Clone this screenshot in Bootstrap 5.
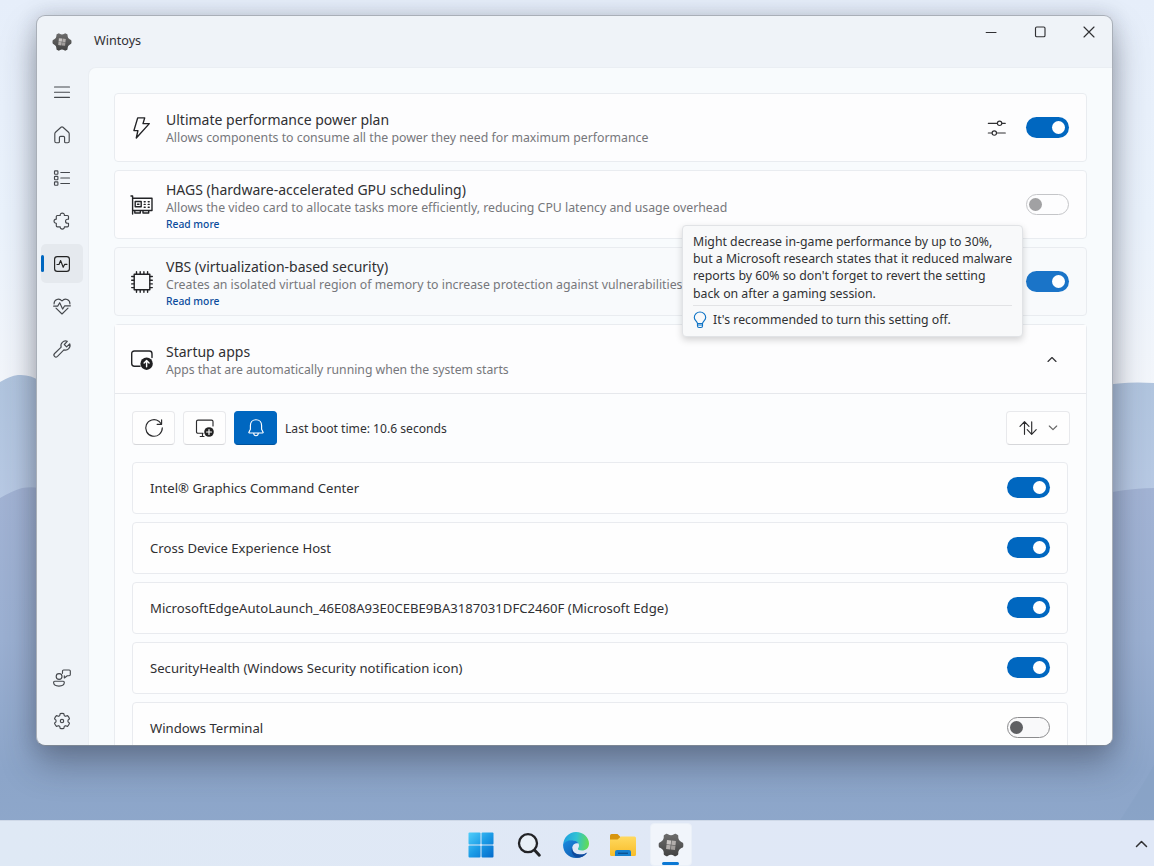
<!DOCTYPE html>
<html lang="en">
<head>
    <meta charset="UTF-8">
    <meta name="viewport" content="width=device-width, initial-scale=1.0">
    <title>Wintoys</title>
    <link href="https://cdn.jsdelivr.net/npm/bootstrap@5.3.0/dist/css/bootstrap.min.css" rel="stylesheet">
    <style>
        html, body {
            height: 100%;
        }
        body {
            font-family: "Noto Sans", "Open Sans", sans-serif;
            font-size: 13.13px;
            color: #303033;
            background: #e8eff9;
            overflow: hidden;
        }
        svg {
            display: block;
            flex: none;
        }
        .line-icon {
            fill: none;
            stroke: currentColor;
            stroke-width: 1.15;
            stroke-linecap: round;
            stroke-linejoin: round;
        }
        .wallpaper {
            position: absolute;
            inset: 0;
            z-index: -1;
        }
        .desktop-area {
            padding: 15px 41px 0 36px;
        }

        /* window */
        .app-window {
            height: 731px;
            border: 1px solid #a9afb8;
            border-bottom-color: #7d8794;
            border-radius: 9px;
            background: #eff3f8;
            box-shadow: 0 18px 34px rgba(40, 46, 60, .38), 0 0 20px rgba(40, 46, 60, .18);
            overflow: hidden;
        }
        .title-bar {
            height: 51px;
            padding-left: 15px;
        }
        .title-text {
            font-size: 12.6px;
            margin-left: 22px;
        }
        .caption-buttons {
            gap: 33px;
            height: 32px;
            padding-right: 15px;
        }
        .side-nav {
            width: 51px;
            padding: 6px 4px 5px;
        }
        .side-nav a {
            position: relative;
            display: flex;
            align-items: center;
            justify-content: center;
            width: 42px;
            height: 38.8px;
            margin-bottom: 4px;
            border-radius: 5px;
            color: #45484d;
        }
        .side-nav a.active {
            background: #e5e9ee;
            color: #222;
        }
        .side-nav a.active::before {
            content: "";
            position: absolute;
            left: 0;
            top: 11px;
            width: 3px;
            height: 17px;
            border-radius: 2px;
            background: #0067c0;
        }
        .page-body {
            min-width: 0;
            padding: 25px 25px 0 25px;
            border: 1px solid #eaeef3;
            border-width: 1px 0 0 1px;
            border-top-left-radius: 8px;
            background: #f8fbfd;
            overflow: hidden;
        }

        /* settings */
        .setting {
            height: 69px;
            margin-bottom: 8px;
            padding: 0 17px 0 15px;
            border: 1px solid #e9ecf0;
            border-radius: 4px;
            background: #fdfdfe;
        }
        .setting.hovered {
            background: #f8fafc;
        }
        .setting-icon {
            width: 24px;
            margin-right: 12px;
            color: #222326;
        }
        .setting-label {
            padding-top: 1px;
        }
        .setting-label.with-link {
            padding-top: 3px;
        }
        .setting-title {
            font-size: 14px;
            line-height: 19px;
            white-space: nowrap;
        }
        .setting-text {
            font-size: 12.31px;
            line-height: 18px;
            color: #76777b;
            white-space: nowrap;
        }
        .setting-link {
            font-size: 10.3px;
            font-weight: 500;
            line-height: 15px;
            color: #0b4c9c;
            text-decoration: none;
        }
        .toggle {
            width: 43px;
            height: 21px;
            margin-top: -1px;
            padding: 0 4px;
            border-radius: 11px;
            background: #0067c0;
            display: flex;
            align-items: center;
            justify-content: flex-end;
        }
        .toggle::after {
            content: "";
            width: 13px;
            height: 13px;
            border-radius: 50%;
            background: #fff;
        }
        .toggle.soft {
            background: #1a74c8;
        }
        .toggle.off {
            justify-content: flex-start;
            padding: 0 2px;
            border: 1px solid #8b8b8d;
            background: #f9f9fa;
        }
        .toggle.off::after {
            background: #5f6063;
        }
        .toggle.disabled {
            border-color: #c4c5c8;
            background: #fdfdfe;
        }
        .toggle.disabled::after {
            background: #a1a1a3;
        }

        /* startup apps */
        .expander {
            border: 1px solid #e9ecf0;
            border-radius: 4px;
            background: #fcfdfe;
        }
        .expander-head {
            height: 69px;
            padding: 2px 27px 0 15px;
            border-bottom: 1px solid #e6e8ec;
            background: #fdfdfe;
        }
        .expander-head .setting-text {
            font-size: 12.23px;
        }
        .expander-body {
            padding: 17px 18px 0 17px;
        }
        .tool-bar {
            margin-bottom: 17px;
        }
        .tool-btn {
            width: 43px;
            height: 34px;
            padding: 0;
            border: 1px solid #e8e9ec;
            border-bottom-color: #d6d7da;
            border-radius: 4px;
            background: #fefefe;
            color: #2b2b2d;
            display: flex;
            align-items: center;
            justify-content: center;
        }
        .tool-btn.wide {
            width: 64px;
            gap: 9px;
            margin-right: -2px;
        }
        .tool-btn.accent {
            border-color: #0067c0;
            border-bottom-color: #00539c;
            background: #0067c0;
            color: #fff;
        }
        .boot-time {
            font-size: 12.12px;
            padding-top: 2px;
        }
        .app-row {
            height: 51.9px;
            margin-bottom: 8px;
            padding: 0 17px;
            border: 1px solid #e9ebef;
            border-radius: 4px;
            background: #fefefe;
        }
        .app-row span {
            padding-top: 2px;
        }

        /* tooltip over the VBS row */
        .hint {
            position: absolute;
            left: 682px;
            top: 225px;
            z-index: 5;
            width: 341px;
            height: 112px;
            padding: 7px 10px 0 10px;
            border: 1px solid #e1e3e6;
            border-radius: 4px;
            background: #f8f9fa;
            box-shadow: 0 3px 7px rgba(0, 0, 0, .17);
            font-size: 12.31px;
            line-height: 17.2px;
            color: #303133;
            white-space: nowrap;
        }
        .hint-foot {
            margin-top: 3px;
            padding-top: 5px;
            border-top: 1px solid #e2e3e5;
            gap: 6px;
        }

        /* taskbar */
        .taskbar {
            position: absolute;
            inset: 820px 0 0 0;
            background: linear-gradient(90deg, #dfe9f5, #e0e8f6 60%, #e0e8f7);
            border-top: 1px solid #cfd9e8;
        }
        .taskbar-apps {
            gap: 5.3px;
            padding: 2px 2px 0 0;
        }
        .task-tile {
            position: relative;
            display: flex;
            align-items: center;
            justify-content: center;
            width: 42px;
            height: 43px;
            border-radius: 4px;
        }
        .task-tile.active {
            background: #f1f5fb;
            border: 1px solid #eaf0f8;
        }
        .task-tile.active::after {
            content: "";
            position: absolute;
            left: 11px;
            bottom: 0;
            width: 17px;
            height: 3px;
            border-radius: 2px;
            background: #0b78d4;
        }
        .tray-arrow {
            position: absolute;
            right: 6px;
            top: 17px;
        }
    </style>
</head>
<body>
    <svg class="wallpaper" width="1154" height="866" viewBox="0 0 1154 866">
        <defs>
            <linearGradient id="sky" x1="0" y1="0" x2="0" y2="1">
                <stop offset="0" stop-color="#e6eefa"/>
                <stop offset=".25" stop-color="#eaf2fc"/>
                <stop offset=".45" stop-color="#f3f6fb"/>
            </linearGradient>
            <linearGradient id="far" x1="0" y1="0" x2="0" y2="1">
                <stop offset="0" stop-color="#b0c4de"/>
                <stop offset=".3" stop-color="#b9cae5"/>
            </linearGradient>
            <linearGradient id="near" x1="0" y1="0" x2="0" y2="1">
                <stop offset="0" stop-color="#a2b3d4"/>
                <stop offset=".4" stop-color="#9bb0d2"/>
                <stop offset=".75" stop-color="#8ca5c9"/>
                <stop offset="1" stop-color="#8fa8cb"/>
            </linearGradient>
        </defs>
        <rect width="1154" height="866" fill="url(#sky)"/>
        <path d="M0 382Q10 376 18 375Q30 374 40 381L1100 386Q1125 381 1154 383V866H0Z" fill="url(#far)"/>
        <path d="M0 498Q12 491 22 488Q34 486 44 489L1100 495Q1120 489 1154 488V866H0Z" fill="url(#near)"/>
        <path d="M1154 765Q1140 790 1120 820H1154Z" fill="#7f99bf" opacity=".2"/>
    </svg>

    <svg width="0" height="0" class="position-absolute">
        <defs>
            <linearGradient id="gearFill" x1="0" y1="0" x2="0" y2="26" gradientUnits="userSpaceOnUse">
                <stop offset="0" stop-color="#707070"/>
                <stop offset="1" stop-color="#3f3f3f"/>
            </linearGradient>
            <symbol id="wintoys" viewBox="0 0 26 26">
                <path d="M8.300 1.800Q9.200 1.400 10 2.300Q13 4.300 16 2.300Q16.800 1.400 17.700 1.800L19.800 3Q20.700 3.700 20.200 4.900Q20.300 8.300 23.400 9.900Q25.300 10.500 25.300 11.800V14.200Q25.300 15.500 23.400 16.100Q20.300 17.700 20.200 21.100Q20.700 22.300 19.800 23L17.700 24.200Q16.800 24.600 16 23.700Q13 21.700 10 23.700Q9.200 24.600 8.300 24.200L6.200 23Q5.300 22.300 5.800 21.100Q5.700 17.700 2.600 16.100Q.700 15.500.700 14.200V11.800Q.700 10.500 2.600 9.900Q5.700 8.300 5.800 4.900Q5.300 3.700 6.200 3Z" fill="url(#gearFill)"/>
                <g fill="#c9c5c3" transform="rotate(6 13 13)">
                    <rect x="8.500" y="8.500" width="4.200" height="4.200"/>
                    <rect x="13.300" y="8.500" width="4.200" height="4.200" fill="#b2aeac"/>
                    <rect x="8.500" y="13.300" width="4.200" height="4.200" fill="#b2aeac"/>
                    <rect x="13.300" y="13.300" width="4.200" height="4.200" fill="#a09c9a"/>
                </g>
            </symbol>
        </defs>
    </svg>

    <div class="desktop-area">
        <div class="app-window d-flex flex-column">
            <div class="title-bar d-flex align-items-center flex-shrink-0">
                <svg width="20" height="20"><use href="#wintoys"/></svg>
                <span class="title-text">Wintoys</span>
                <div class="caption-buttons d-flex align-items-center ms-auto align-self-start">
                    <svg class="line-icon" width="16" height="16" viewBox="0 0 16 16"><path d="M3.200 8.500H13" /></svg>
                    <svg class="line-icon" width="16" height="16" viewBox="0 0 16 16"><rect x="3.500" y="3" width="9.500" height="9.700" rx="1.300"/></svg>
                    <svg class="line-icon" width="16" height="16" viewBox="0 0 16 16"><path d="M3 3L13 13M13 3L3 13"/></svg>
                </div>
            </div>

            <div class="d-flex flex-grow-1" style="min-height: 0">
                <nav class="side-nav d-flex flex-column flex-shrink-0">
                    <a href="#"><svg class="line-icon" width="20" height="20" viewBox="0 0 20 20"><path d="M2.500 5H17.500M2.500 10.200H17.500M2.500 15.300H17.500"/></svg></a>
                    <a href="#"><svg class="line-icon" width="20" height="20" viewBox="0 0 20 20"><path d="M2.800 8.800Q2.800 7.800 3.500 7.200L9 2.300Q10 1.500 11 2.300L16.500 7.200Q17.200 7.800 17.200 8.800V16.200Q17.200 17.700 15.700 17.700H13.600Q12.600 17.700 12.600 16.700V12.500Q12.600 11.300 11.400 11.300H8.600Q7.400 11.300 7.400 12.500V16.700Q7.400 17.700 6.400 17.700H4.300Q2.800 17.700 2.800 16.200Z"/></svg></a>
                    <a href="#"><svg class="line-icon" width="20" height="20" viewBox="0 0 20 20"><rect x="2.500" y="2.800" width="3.400" height="3.400" rx=".6"/><rect x="2.500" y="8.300" width="3.400" height="3.400" rx=".6"/><rect x="2.500" y="13.800" width="3.400" height="3.400" rx=".6"/><path d="M8.800 4.500H17.500M8.800 10H17.500M8.800 15.500H17.500"/></svg></a>
                    <a href="#"><svg class="line-icon" width="20" height="20" viewBox="0 0 20 20"><path d="M5.300 4.500H8.200C7.900 1.300 12.700 1.300 12.400 4.500H15.500Q16.500 4.500 16.500 5.500V8.200H15.500C12.900 8.200 12.900 12.200 15.500 12.200H16.500V14.800Q16.500 15.800 15.500 15.800H12.400C12.700 18.800 7.900 18.800 8.200 15.800H5.300Q4.300 15.800 4.300 14.800V12.200C1.300 12.500 1.300 7.900 4.300 8.200V5.500Q4.300 4.500 5.300 4.500Z"/></svg></a>
                    <a href="#" class="active"><svg class="line-icon" width="20" height="20" viewBox="0 0 20 20"><rect x="2.600" y="2.600" width="14.800" height="14.800" rx="2.700"/><path d="M5 10.500H7L8.600 6.500L11.200 13.300L12.700 10.300H15"/></svg></a>
                    <a href="#"><svg class="line-icon" width="20" height="20" viewBox="0 0 20 20"><path d="M2.100 7.900C1.800 3.500 7 1.300 10 5C13 1.300 18.200 3.500 17.900 7.900M4 12.100L10 18L16 12.100M1.600 10.100H5.700L7.700 6.700L10.600 13.100L12.700 9.800H18.400"/></svg></a>
                    <a href="#"><svg class="line-icon" width="20" height="20" viewBox="0 0 20 20"><path d="M15.300 2.300C11.500.900 7.900 4.400 9.200 8.200L2.600 14.500C.600 16.500 3.400 19.400 5.500 17.400L11.900 10.900C15.600 12.200 19.200 8.500 17.700 4.800L14.600 7.800L12.300 5.500Z"/></svg></a>

                    <a href="#" class="mt-auto"><svg class="line-icon" width="20" height="20" viewBox="0 0 20 20"><circle cx="7.100" cy="8.500" r="2.900"/><path d="M2.700 13.200H11.200Q12.300 13.200 12.300 14.300C12.300 19.300 1.600 19.300 1.600 14.300Q1.600 13.200 2.700 13.200ZM10.500 5.300V3.100Q10.500 2 11.600 2H17.200Q18.300 2 18.300 3.100V6.600Q18.300 7.700 17.200 7.700H15.300L12.300 10V7.700"/></svg></a>
                    <a href="#" class="mb-0"><svg class="line-icon" width="20" height="20" viewBox="0 0 20 20"><path d="M8.200 2.600Q10 2.200 11.800 2.600L12.300 4.700Q13 5 13.500 5.300L15.600 4.600Q17 6 17.500 7.800L16 9.200V10.800L17.500 12.200Q17 14 15.600 15.400L13.500 14.700Q13 15 12.300 15.300L11.800 17.400Q10 17.800 8.200 17.400L7.700 15.300Q7 15 6.500 14.700L4.400 15.400Q3 14 2.500 12.200L4 10.800V9.200L2.500 7.800Q3 6 4.400 4.600L6.500 5.300Q7 5 7.700 4.700Z"/><circle cx="10" cy="10" r="1.700"/></svg></a>
                </nav>

                <main class="page-body flex-grow-1">
                    <div class="setting d-flex align-items-center">
                        <div class="setting-icon"><svg class="line-icon" width="24" height="24" viewBox="0 0 24 24" style="stroke-width:1.400"><path d="M7.700 1.900H14.700L13 7.600H19.300L6.300 22L7.900 14.600H3.900Z"/></svg></div>
                        <div class="setting-label">
                            <div class="setting-title">Ultimate performance power plan</div>
                            <div class="setting-text">Allows components to consume all the power they need for maximum performance</div>
                        </div>
                        <svg class="line-icon ms-auto me-3" width="26" height="20" viewBox="0 0 26 20"><path d="M4.300 5.300H13.300M18 5.300H21.300M4.300 15H8M12.700 15H21.300"/><circle cx="15.600" cy="5.300" r="2.200"/><circle cx="10.300" cy="15" r="2.200"/></svg>
                        <div class="toggle"></div>
                    </div>

                    <div class="setting d-flex align-items-center">
                        <div class="setting-icon"><svg class="line-icon" width="24" height="24" viewBox="0 0 24 24" style="stroke-width:1.400"><path d="M1 3H2.600V21M2.600 5.300H22V17.500H2.600M4.800 17.500V20H10.300V17.500M13 17.500V20H18.700V17.500"/><rect x="5.200" y="8.500" width="6" height="5.300"/><path d="M14.200 8.700H15.200M18.200 8.700H19.200M14.200 11.400H15.200M18.200 11.400H19.200M14.200 14.300H15.200M18.200 14.300H19.200M7.500 11.300H9"/></svg></div>
                        <div class="setting-label with-link">
                            <div class="setting-title">HAGS (hardware-accelerated GPU scheduling)</div>
                            <div class="setting-text">Allows the video card to allocate tasks more efficiently, reducing CPU latency and usage overhead</div>
                            <a href="#" class="setting-link d-block">Read more</a>
                        </div>
                        <div class="toggle off disabled ms-auto"></div>
                    </div>

                    <div class="setting hovered d-flex align-items-center">
                        <div class="setting-icon"><svg class="line-icon" width="24" height="24" viewBox="0 0 24 24" style="stroke-width:1.400"><rect x="4.200" y="4.200" width="15.600" height="15.600"/><path d="M6.500 1.700V4M10.200 1.700V4M13.900 1.700V4M17.600 1.700V4M6.500 20V22.300M10.200 20V22.300M13.900 20V22.300M17.600 20V22.300M1.700 6.500H4M1.700 10.200H4M1.700 13.900H4M1.700 17.600H4M20 6.500H22.300M20 10.200H22.300M20 13.900H22.300M20 17.600H22.300"/></svg></div>
                        <div class="setting-label with-link">
                            <div class="setting-title">VBS (virtualization-based security)</div>
                            <div class="setting-text">Creates an isolated virtual region of memory to increase protection against vulnerabilities</div>
                            <a href="#" class="setting-link d-block">Read more</a>
                        </div>
                        <div class="toggle soft ms-auto"></div>
                    </div>

                    <div class="expander">
                        <div class="expander-head d-flex align-items-center">
                            <div class="setting-icon"><svg class="line-icon" width="24" height="24" viewBox="0 0 24 24" style="stroke-width:1.400"><path d="M10 18.200H4.400Q1.700 18.200 1.700 15.500V5.700Q1.700 3 4.400 3H19.300Q22 3 22 5.700V9.500"/><circle cx="16.600" cy="15.700" r="6.200" fill="#1f1f21" stroke="none"/><path d="M16.600 18.700V12.700M14.100 15L16.600 12.500L19.100 15" stroke="#fff"/></svg></div>
                            <div class="setting-label">
                                <div class="setting-title">Startup apps</div>
                                <div class="setting-text">Apps that are automatically running when the system starts</div>
                            </div>
                            <svg class="line-icon ms-auto" width="14" height="14" viewBox="0 0 14 14"><path d="M3 8.500L7 4.500L11 8.500"/></svg>
                        </div>

                        <div class="expander-body">
                            <div class="tool-bar d-flex align-items-center">
                                <button type="button" class="tool-btn me-2"><svg class="line-icon" width="20" height="20" viewBox="0 0 20 20"><path d="M18.300 9.800A8.300 8.300 0 1 1 14.800 3.200L17.300 5.800M17.600 1.800V6.300H13.100"/></svg></button>
                                <button type="button" class="tool-btn me-2"><svg class="line-icon" width="20" height="20" viewBox="0 0 20 20"><path d="M8 15.200H3Q1.500 15.200 1.500 13.700V3.600Q1.500 2.100 3 2.100H16.500Q18 2.100 18 3.600V8M7.500 15.500V18.500M5.200 18.500H9"/><circle cx="14" cy="14" r="4.800" fill="#222" stroke="none"/><path d="M14 11.500V16.500M11.500 14H16.500" stroke="#fff"/></svg></button>
                                <button type="button" class="tool-btn accent me-2"><svg class="line-icon" width="20" height="20" viewBox="0 0 20 20"><path d="M10 1.700C6.500 1.700 4.400 4.300 4.400 7.500V11.300L2.900 14.200Q2.600 15 3.400 15H16.600Q17.400 15 17.100 14.200L15.600 11.300V7.500C15.600 4.300 13.500 1.700 10 1.700ZM7.700 15.300C7.900 18.500 12.100 18.500 12.300 15.300"/></svg></button>
                                <span class="boot-time">Last boot time: 10.6 seconds</span>
                                <button type="button" class="tool-btn wide ms-auto"><svg class="line-icon" width="20" height="18" viewBox="0 0 20 18"><path d="M6.500 15.300V3M2 7.300L6.500 2.700L11 7.300M13.700 2.700V15M9.200 10.700L13.700 15.300L18.200 10.700"/></svg><svg class="line-icon" width="12" height="12" viewBox="0 0 12 12"><path d="M2.300 4L6 7.700L9.700 4" stroke="#666"/></svg></button>
                            </div>

                            <div class="app-row d-flex align-items-center justify-content-between"><span>Intel® Graphics Command Center</span><div class="toggle"></div></div>
                            <div class="app-row d-flex align-items-center justify-content-between"><span>Cross Device Experience Host</span><div class="toggle"></div></div>
                            <div class="app-row d-flex align-items-center justify-content-between"><span>MicrosoftEdgeAutoLaunch_46E08A93E0CEBE9BA3187031DFC2460F (Microsoft Edge)</span><div class="toggle"></div></div>
                            <div class="app-row d-flex align-items-center justify-content-between"><span>SecurityHealth (Windows Security notification icon)</span><div class="toggle"></div></div>
                            <div class="app-row d-flex align-items-center justify-content-between"><span>Windows Terminal</span><div class="toggle off"></div></div>
                        </div>
                    </div>
                </main>
            </div>
        </div>
    </div>

    <div class="hint">
        Might decrease in-game performance by up to 30%,<br>
        but a Microsoft research states that it reduced malware<br>
        reports by 60% so don't forget to revert the setting<br>
        back on after a gaming session.
        <div class="hint-foot d-flex align-items-center">
            <svg class="line-icon" width="14" height="18" viewBox="0 0 14 18" style="color:#0f74c6"><path d="M4.500 12.500C4.300 10.500 1.300 9.500 1.300 6.500A5.700 5.500 0 0 1 12.700 6.500C12.700 9.500 9.700 10.500 9.500 12.500ZM4.500 12.500V15Q4.500 16.500 6 16.500H8Q9.500 16.500 9.500 15V12.500M4.700 14H9.300"/></svg>
            <span>It's recommended to turn this setting off.</span>
        </div>
    </div>

    <footer class="taskbar">
        <div class="taskbar-apps d-flex justify-content-center">
            <div class="task-tile">
                <svg width="26" height="26" viewBox="0 0 26 26">
                    <defs><linearGradient id="win" x1="0" y1="0" x2="26" y2="26" gradientUnits="userSpaceOnUse"><stop offset="0" stop-color="#52d0fb"/><stop offset=".5" stop-color="#1b9be6"/><stop offset="1" stop-color="#0469ca"/></linearGradient></defs>
                    <g fill="url(#win)"><rect x=".5" y=".5" width="12" height="12" rx="1"/><rect x="13.500" y=".5" width="12" height="12" rx="1"/><rect x=".5" y="13.500" width="12" height="12" rx="1"/><rect x="13.500" y="13.500" width="12" height="12" rx="1"/></g>
                </svg>
            </div>
            <div class="task-tile">
                <svg width="26" height="26" viewBox="0 0 26 26" fill="none" stroke="#222326" stroke-linecap="round"><circle cx="12" cy="11.200" r="9" stroke-width="2.300" fill="#e9f0f7"/><path d="M18.700 18.300L23.300 23.200" stroke-width="3"/></svg>
            </div>
            <div class="task-tile">
                <svg width="26" height="26" viewBox="0 0 26 26">
                    <defs>
                        <linearGradient id="edgeTop" x1="0" y1=".4" x2="1" y2=".5"><stop offset="0" stop-color="#1e9fe0"/><stop offset=".5" stop-color="#2fc2d4"/><stop offset="1" stop-color="#63dc52"/></linearGradient>
                        <linearGradient id="edgeLow" x1="0" y1="0" x2="1" y2="1"><stop offset="0" stop-color="#1a8be0"/><stop offset="1" stop-color="#0d4fa5"/></linearGradient>
                    </defs>
                    <path d="M.200 13C.500 5.500 6 0 13 0C20.500 0 26 5.500 26 11.500C26 16 22.800 18.500 19 18.500C16 18.500 14.500 17.500 15 16.500C17.500 13.500 15.500 9 10.500 8.700C5.500 8.500 1.500 10.500.200 13Z" fill="url(#edgeTop)"/>
                    <path d="M.100 12.500C1.500 9.500 5.500 7.800 9.500 8.200C12.500 8.500 15 9.700 15.300 11.500C13.500 10.500 9.500 11.700 9.200 15.700C9 19.500 12 22.200 16.500 22.500C20 22.700 22.500 21.500 24.300 20.400C21.700 24 17.600 26 13 26C5.500 26-.300 20 .100 12.500Z" fill="url(#edgeLow)"/>
                    <path d="M9.200 15.700C9 19.500 12 22.200 16.500 22.500C20 22.700 22.500 21.500 24.300 20.400C22 23.500 18.500 25.500 14.500 25.500C9.500 24 7.500 19.500 9.200 15.700Z" fill="#104a9c"/>
                </svg>
            </div>
            <div class="task-tile">
                <svg width="28" height="24" viewBox="0 0 28 24">
                    <defs><linearGradient id="folder" x1="0" y1="0" x2="0" y2="1"><stop offset="0" stop-color="#ffd95f"/><stop offset="1" stop-color="#f8bd2a"/></linearGradient></defs>
                    <path d="M1 2.500Q1 1 2.500 1H8.500L11.500 4V8H1Z" fill="#d7950f"/>
                    <path d="M1 6.500H8.500L12 3.500H25.500Q27 3.500 27 5V21.500Q27 23 25.500 23H2.500Q1 23 1 21.500Z" fill="url(#folder)"/>
                    <path d="M6 23V19Q6 17 8 17H20Q22 17 22 19V23Z" fill="#157fcf"/>
                    <path d="M9 20.300H19" stroke="#0b5292" stroke-width="1.400"/>
                </svg>
            </div>
            <div class="task-tile active">
                <svg width="26" height="26"><use href="#wintoys"/></svg>
            </div>
        </div>
        <svg class="tray-arrow line-icon" width="13" height="12" viewBox="0 0 13 12" style="stroke-width:1.500"><path d="M1.500 8.500L6.500 3.500L11.500 8.500"/></svg>
    </footer>

    <script src="https://cdn.jsdelivr.net/npm/bootstrap@5.3.0/dist/js/bootstrap.bundle.min.js"></script>
</body>
</html>
